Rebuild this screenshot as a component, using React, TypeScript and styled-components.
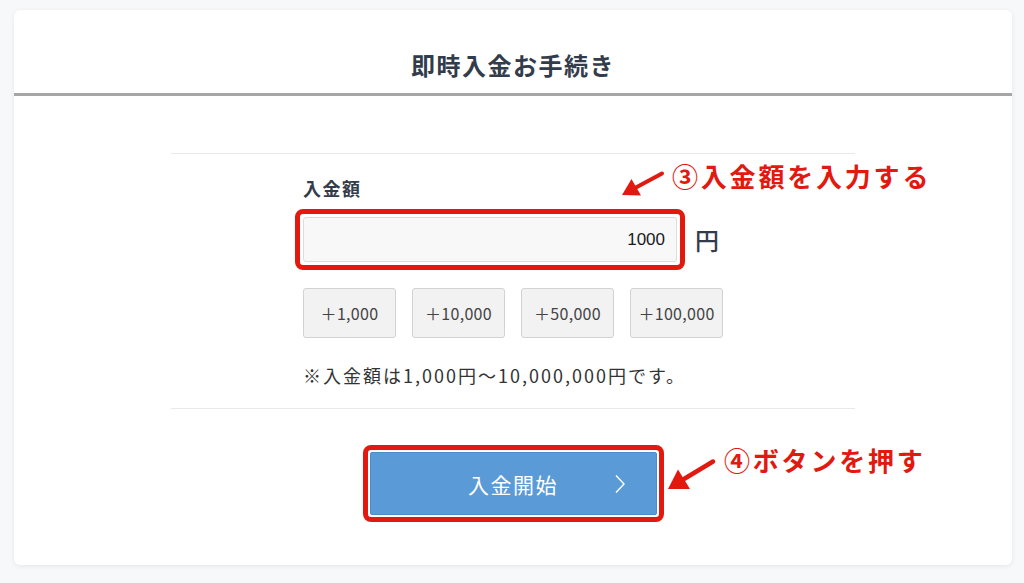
import styled, { createGlobalStyle } from "styled-components";

const GlobalStyle = createGlobalStyle`
  body {
    margin: 0;
    background: #f7f8fa;
    font-family: "Noto Sans CJK JP", "Noto Sans", sans-serif;
    color: #333;
  }
`;

const Page = styled.div`
  width: 1024px;
  height: 583px;
  padding-top: 10px;
  box-sizing: border-box;
`;

const Card = styled.div`
  position: relative;
  margin-left: 14px;
  width: 998px;
  height: 555px;
  background: #fff;
  border-radius: 6px;
  box-shadow: 0 1px 5px rgba(0, 0, 0, 0.08);
`;

const Header = styled.div`
  height: 86px;
  box-sizing: border-box;
  display: flex;
  align-items: flex-end;
  justify-content: center;
  padding-bottom: 16px;
  border-bottom: 3px solid #a6a6a6;
`;

const Title = styled.h1`
  margin: 0;
  font-size: 24px;
  line-height: 24px;
  font-weight: 700;
  color: #333c4a;
  letter-spacing: 1.5px;
`;

const Section = styled.div`
  width: 684px;
  margin: 57px auto 0;
  box-sizing: border-box;
  padding: 24px 0 21px 132px;
  border-top: 1px solid #e9e9e9;
  border-bottom: 1px solid #e9e9e9;
`;

const Label = styled.div`
  font-size: 18px;
  line-height: 20px;
  font-weight: 700;
  color: #333c4a;
  letter-spacing: 1.5px;
`;

const InputRow = styled.div`
  display: flex;
  align-items: center;
  margin-top: 19px;
`;

const Highlight = styled.div<{ $inset: number }>`
  position: relative;
  &::after {
    content: "";
    position: absolute;
    inset: -${(p) => p.$inset}px;
    border: 5px solid #e2190f;
    border-radius: 8px;
    pointer-events: none;
  }
`;

const AmountInput = styled.input`
  display: block;
  width: 374px;
  height: 45px;
  box-sizing: border-box;
  border: 1px solid #dcdcdc;
  border-radius: 3px;
  background: #f8f8f8;
  text-align: right;
  padding: 0 11px 0 10px;
  font-family: "Liberation Sans", "Noto Sans CJK JP", sans-serif;
  font-size: 17px;
  color: #1a1a1a;
  outline: none;
`;

const Unit = styled.span`
  margin-left: 18px;
  font-size: 24px;
  font-weight: 500;
  color: #333c4a;
`;

const QuickRow = styled.div`
  display: flex;
  gap: 16px;
  margin-top: 26px;
`;

const QuickButton = styled.button`
  width: 93px;
  height: 50px;
  border: 1px solid #d2d2d2;
  border-radius: 3px;
  background: #f2f2f2;
  font-family: "Noto Sans CJK JP", sans-serif;
  font-size: 16px;
  letter-spacing: 0.3px;
  color: #444;
  padding: 0;
`;

const Note = styled.p`
  margin: 25px 0 0;
  font-size: 18px;
  line-height: 24px;
  letter-spacing: 2px;
  color: #333;
`;

const SubmitWrap = styled.div`
  display: flex;
  justify-content: center;
  margin-top: 43px;
`;

const SubmitButton = styled.button`
  position: relative;
  width: 287px;
  height: 63px;
  border: 1px solid #4d8ccc;
  border-radius: 2px;
  background: #5a9bd7;
  color: #fff;
  font-family: "Noto Sans CJK JP", sans-serif;
  font-size: 21px;
  letter-spacing: 1.5px;
  display: flex;
  align-items: center;
  justify-content: center;
`;

const Chevron = styled.svg`
  position: absolute;
  right: 30px;
  top: 21px;
`;

const Annotation = styled.div<{ $x: number; $y: number }>`
  position: absolute;
  left: ${(p) => p.$x}px;
  top: ${(p) => p.$y}px;
  font-size: 26px;
  line-height: 30px;
  font-weight: 700;
  color: #e2190f;
  letter-spacing: 2.8px;
  white-space: nowrap;
`;

const Arrow = styled.svg<{ $x: number; $y: number }>`
  position: absolute;
  left: ${(p) => p.$x}px;
  top: ${(p) => p.$y}px;
`;

const amounts = ["1,000", "10,000", "50,000", "100,000"];

export default function App() {
  return (
    <Page>
      <GlobalStyle />
      <Card>
        <Header>
          <Title>即時入金お手続き</Title>
        </Header>
        <Section>
          <Label>入金額</Label>
          <InputRow>
            <Highlight $inset={8}>
              <AmountInput defaultValue="1000" />
            </Highlight>
            <Unit>円</Unit>
          </InputRow>
          <QuickRow>
            {amounts.map((a) => (
              <QuickButton key={a}>＋{a}</QuickButton>
            ))}
          </QuickRow>
          <Note>※入金額は1,000円〜10,000,000円です。</Note>
        </Section>
        <SubmitWrap>
          <Highlight $inset={7}>
            <SubmitButton>
              入金開始
              <Chevron width="12" height="20" viewBox="0 0 12 20">
                <path d="M2 1.5 L10 10 L2 18.5" fill="none" stroke="#fff" strokeWidth="1.4" />
              </Chevron>
            </SubmitButton>
          </Highlight>
        </SubmitWrap>

        {/* annotation overlays */}
        <Arrow $x={600} $y={160} width="60" height="30" viewBox="600 160 60 30">
          <line x1="648" y1="163.5" x2="621" y2="178" stroke="#e2190f" strokeWidth="4" strokeLinecap="round" />
          <polygon points="608,185 627,185.5 617.5,169" fill="#e2190f" />
        </Arrow>
        <Annotation $x={658} $y={151}>③入金額を入力する</Annotation>

        <Arrow $x={650} $y={445} width="60" height="40" viewBox="650 445 60 40">
          <line x1="699" y1="451.5" x2="670" y2="469" stroke="#e2190f" strokeWidth="4.5" strokeLinecap="round" />
          <polygon points="654,479 676,479 664,459.5" fill="#e2190f" />
        </Arrow>
        <Annotation $x={710} $y={435}>④ボタンを押す</Annotation>
      </Card>
    </Page>
  );
}
